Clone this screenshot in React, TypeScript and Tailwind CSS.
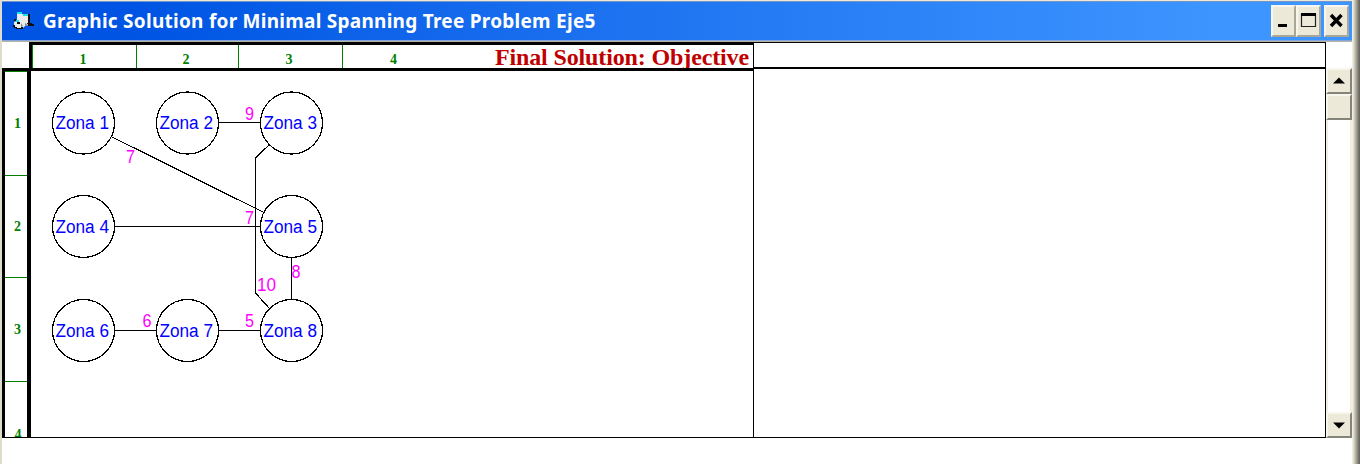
import React from "react";

const columns = [
  { label: "1", cell: "w-[104px]" },
  { label: "2", cell: "w-[102px]" },
  { label: "3", cell: "w-[104px]" },
];

const rows = [
  { label: "1", cell: "h-[104px]" },
  { label: "2", cell: "h-[102px]" },
  { label: "3", cell: "h-[104px]" },
];

const nodes = [
  { name: "Zona 1", x: 83.5, y: 123 },
  { name: "Zona 2", x: 187.5, y: 123 },
  { name: "Zona 3", x: 291.5, y: 123 },
  { name: "Zona 4", x: 83.5, y: 226.5 },
  { name: "Zona 5", x: 291.5, y: 226.5 },
  { name: "Zona 6", x: 83.5, y: 330.5 },
  { name: "Zona 7", x: 187.5, y: 330.5 },
  { name: "Zona 8", x: 291.5, y: 330.5 },
];

const edges = [
  "M218 122.5H261",
  "M111 136.5L263 212",
  "M269 145L255.5 158V293L269 308",
  "M114 226.5H261",
  "M291.5 257V300",
  "M114 330.5H157",
  "M218 330.5H261",
];

const weights = [
  { value: "9", x: 245, y: 120, w: 9 },
  { value: "7", x: 126, y: 163, w: 9 },
  { value: "7", x: 245, y: 224, w: 9 },
  { value: "10", x: 257, y: 291, w: 19 },
  { value: "8", x: 291.5, y: 278, w: 9 },
  { value: "6", x: 142.5, y: 326.5, w: 9 },
  { value: "5", x: 245, y: 326.5, w: 9 },
];

function AppIcon() {
  return (
    <svg width="24" height="20" viewBox="0 0 24 20" className="shrink-0">
      <path d="M6 1h4l1 2h7v11l-4 1-2 2H5l-2-3v-3l3-1z" fill="#ececec" />
      <path d="M6 1h5v2H6zM12 3h5v2h-5zM4 9h4v2H4z" fill="#19dfe8" />
      <path d="M17 3h2v9h2v1h2v2h-6v-2h-1v-1h1zM3 8h2v2H3zM2 14h2v2h2v1h4v-1h2v2H5v-1H3v-1H2zM6 11h3v2H6z" fill="#111" />
      <path d="M10 12l2 3-2 1zM14 12l3 2-3 1z" fill="#888" />
    </svg>
  );
}

function CaptionButton({ children }: { children: React.ReactNode }) {
  return (
    <div className="h-[32px] w-[25px] shrink-0 border-2 border-t-[#f7f5ec] border-l-[#f7f5ec] border-r-[#aaa798] border-b-[#aaa798] bg-[#ece9d8]">
      <svg width="21" height="28" viewBox="0 0 21 28" className="block">
        {children}
      </svg>
    </div>
  );
}

function TitleBar() {
  return (
    <div className="flex h-[40px] shrink-0 items-center border-t border-b border-t-[#7595c8] border-b-[#83a5d8] bg-linear-to-r from-[#0054e3] from-10% to-[#3d95ff] to-90% pl-[9px] pr-[3px]">
      <AppIcon />
      <span className="ml-[8px] w-[580px] whitespace-nowrap font-['Noto_Sans',sans-serif] text-[19px] leading-[28px] font-bold tracking-[0.26px] text-white">
        Graphic Solution for Minimal Spanning Tree Problem Eje5
      </span>
      <div className="mb-px ml-auto flex">
        <CaptionButton>
          <rect x="5" y="17" width="9" height="3" fill="#000" />
        </CaptionButton>
        <CaptionButton>
          <path d="M3.5 7.5h14v12h-14z" fill="none" stroke="#222" strokeWidth="1.2" />
          <path d="M3 6h15v3H3z" fill="#000" />
        </CaptionButton>
        <div className="w-[3px]" />
        <CaptionButton>
          <path d="M5 8L15.5 19M15.5 8L5 19" stroke="#000" strokeWidth="3.4" />
        </CaptionButton>
      </div>
    </div>
  );
}

function ColumnRuler() {
  return (
    <div className="flex h-[29px] w-[725px] shrink-0 overflow-hidden border-t-[3px] border-r border-b-[3px] border-l-[3px] border-black font-['Liberation_Serif',serif] font-bold">
      <div className="w-px shrink-0 bg-[#008000]" />
      {columns.map((c) => (
        <div key={c.label} className={`${c.cell} flex shrink-0 text-[#008000]`}>
          <div className="flex-1 pt-[7px] pr-[3px] text-center text-[14px] leading-[16px]">{c.label}</div>
          <div className="w-px bg-[#008000]" />
        </div>
      ))}
      <div className="w-[101px] shrink-0 pt-[7px] text-center text-[14px] leading-[16px] text-[#008000]">4</div>
      <div className="ml-auto -mt-px shrink-0 whitespace-nowrap pr-[4px] text-[24px] leading-[26px] font-bold tracking-[-0.13px] text-[#c00000]">
        Final Solution: Objective
      </div>
    </div>
  );
}

function RowRuler() {
  return (
    <div className="flex h-[370px] w-[29px] shrink-0 flex-col overflow-hidden border-t-[3px] border-r-4 border-b border-l-[3px] border-black font-['Liberation_Serif',serif] text-[14px] leading-[16px] font-bold text-[#008000]">
      <div className="h-px shrink-0 bg-[#008000]" />
      {rows.map((r) => (
        <div key={r.label} className={`${r.cell} flex shrink-0 flex-col`}>
          <div className="flex flex-1 items-center justify-center pt-px pl-[3px]">{r.label}</div>
          <div className="h-px bg-[#008000]" />
        </div>
      ))}
      <div className="shrink-0 pt-[45px] pl-[4px] text-center">4</div>
    </div>
  );
}

function Network() {
  return (
    <svg width="722" height="366" viewBox="31 71 722 366" className="block">
      <g fill="none" stroke="#000" strokeWidth="1.2" shapeRendering="crispEdges">
        {edges.map((d) => (
          <path key={d} d={d} />
        ))}
      </g>
      {nodes.map((n) => (
        <g key={n.name}>
          <circle
            cx={n.x}
            cy={n.y}
            r="31"
            fill="#fff"
            stroke="#000"
            strokeWidth="1.2"
            shapeRendering="crispEdges"
          />
          <text
            x={n.x - 28}
            y={n.y + 6}
            fontSize="18"
            textLength="53.5"
            lengthAdjust="spacingAndGlyphs"
            fill="#0000ff"
            className="font-['Liberation_Sans',sans-serif]"
          >
            {n.name}
          </text>
        </g>
      ))}
      {weights.map((w) => (
        <text
          key={`${w.x}-${w.y}`}
          x={w.x}
          y={w.y}
          fontSize="18"
          textLength={w.w}
          lengthAdjust="spacingAndGlyphs"
          fill="#ff00ff"
          className="font-['Liberation_Sans',sans-serif]"
        >
          {w.value}
        </text>
      ))}
    </svg>
  );
}

function ScrollButton({ d }: { d: string }) {
  return (
    <div className="h-[26px] w-[26px] shrink-0 border-2 border-t-[#f7f5ec] border-l-[#f7f5ec] border-r-[#85847a] border-b-[#85847a] bg-[#ece9d8]">
      <svg width="22" height="22" viewBox="0 0 22 22" className="block">
        <path d={d} fill="#000" />
      </svg>
    </div>
  );
}

function ScrollBar() {
  return (
    <div className="flex h-[370px] w-[26px] shrink-0 flex-col bg-white">
      <ScrollButton d="M5 13.5h12l-6-6z" />
      <ScrollButton d="" />
      <div className="flex-1 border-x-2 border-[#f1eee0]" />
      <ScrollButton d="M5 8.5h12l-6 6z" />
    </div>
  );
}

export default function App() {
  return (
    <div className="flex h-[464px] w-[1360px] overflow-hidden bg-white">
      <div className="w-[2px] shrink-0 bg-[#e0dccb]" />
      <div className="flex w-[1350px] shrink-0 flex-col">
        <div className="h-px shrink-0 bg-[#ece9d8]" />
        <TitleBar />
        <div className="h-px shrink-0 bg-[#b5b3a8]" />
        <div className="flex h-[26px] shrink-0">
          <div className="w-[27px] shrink-0 bg-white" />
          <div className="z-10 h-[29px]">
            <ColumnRuler />
          </div>
          <div className="h-[27px] w-[572px] shrink-0 border-t border-r border-b-2 border-black bg-white" />
        </div>
        <div className="flex h-[370px] shrink-0">
          <RowRuler />
          <div className="h-[370px] w-[723px] shrink-0 border-r border-b border-black bg-white pt-[3px]">
            <Network />
          </div>
          <div className="h-[370px] w-[572px] shrink-0 border-r border-b border-black" />
          <ScrollBar />
        </div>
      </div>
      <div className="w-[8px] shrink-0 bg-linear-to-r from-[#f1eee0] from-10% via-[#b5b3a6] via-45% to-[#5e5d56]" />
    </div>
  );
}
